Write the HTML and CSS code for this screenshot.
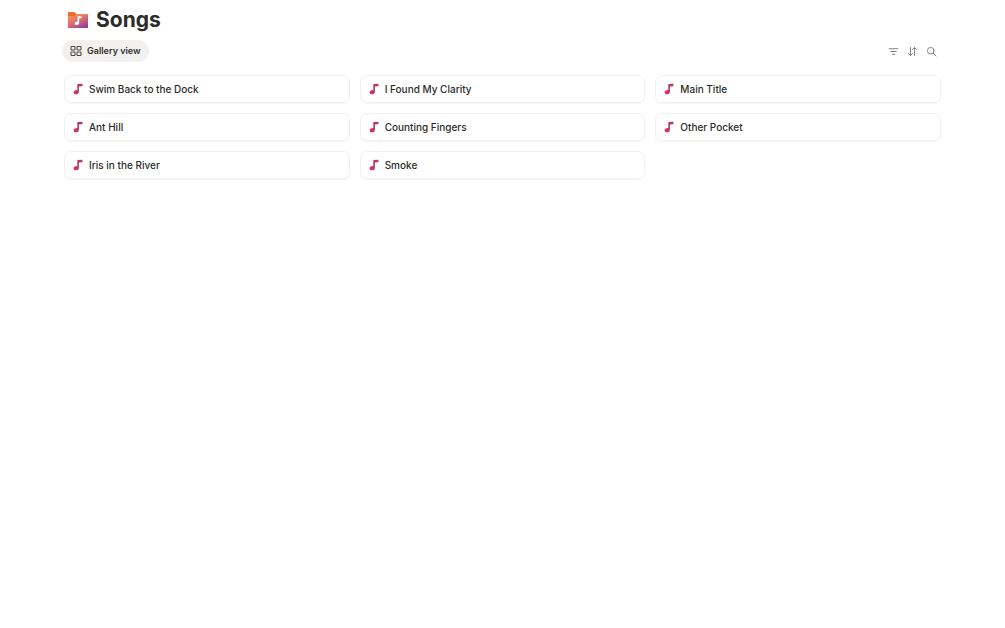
FILE: index.html
```html
<!DOCTYPE html>
<html lang="en">
<head>
<meta charset="utf-8">
<meta name="viewport" content="width=device-width, initial-scale=1">
<title>Songs</title>
<link rel="stylesheet" href="styles.css">
</head>
<body>
<svg width="0" height="0" class="defs" aria-hidden="true">
  <defs>
    <linearGradient id="note-fill" x1="1" y1="0" x2="0" y2="1">
      <stop offset="0" stop-color="#b04468"/>
      <stop offset=".5" stop-color="#b8325c"/>
      <stop offset="1" stop-color="#e03a62"/>
    </linearGradient>
    <symbol id="note" viewBox="0 0 10 12">
      <path fill="url(#note-fill)" d="M4.300 1.600Q4.300 1 4.900 1L8.900.8q.6 0 .6.600v1.300q0 .6-.6.600L5.900 3.600v5.100c0 1.600-1.100 2.600-2.800 2.600-1.500 0-2.500-.7-2.500-1.900 0-1.300 1.100-2.100 3.700-2.300z"/>
    </symbol>
  </defs>
</svg>
<main class="page">
  <header class="heading">
    <svg class="folder" viewBox="0 0 22 18" aria-hidden="true">
      <defs>
        <linearGradient id="folder-fill" x1="0" y1="0" x2=".75" y2="1">
          <stop offset="0" stop-color="#ff9c50"/>
          <stop offset=".5" stop-color="#e0706a"/>
          <stop offset="1" stop-color="#963f9c"/>
        </linearGradient>
      </defs>
      <path fill="#e8702c" d="M1 1.500Q1 1 1.500 1H7.500l2 2.200h11q.5 0 .5.5V8H1z"/>
      <path fill="url(#folder-fill)" d="M1 5H7.500l2-1.600H21V16.400q0 .6-.6.6H1.600Q1 17 1 16.400z"/>
      <path fill="#fff" d="M10.600 5.300h3.900v2h-2.300v4.500c0 1.400-1 2.200-2.400 2.200-1.300 0-2.100-.6-2.100-1.600 0-1.200 1-1.900 2.900-1.900z"/>
    </svg>
    <h1 class="title">Songs</h1>
  </header>
  <div class="toolbar">
    <button class="view" type="button">
      <svg class="view-icon" viewBox="0 0 12 12" fill="none" stroke="#4b4a47" stroke-width="1.1" aria-hidden="true">
        <rect x="1" y="1.500" width="4" height="3.500" rx=".7"/><rect x="7" y="1.500" width="4" height="3.500" rx=".7"/>
        <rect x="1" y="7" width="4" height="3.500" rx=".7"/><rect x="7" y="7" width="4" height="3.500" rx=".7"/>
      </svg>
      Gallery view
    </button>
    <div class="tools">
      <button class="tool" type="button" aria-label="Filter">
        <svg class="tool-icon" viewBox="0 0 11 11"><path d="M1.200 2.700h8.600M2.700 5.500h5.600M4.200 8.300h2.600"/></svg>
      </button>
      <button class="tool" type="button" aria-label="Sort">
        <svg class="tool-icon" viewBox="0 0 11 11"><path d="M3.500 1.500v8M1.500 7.500l2 2 2-2M7.500 9.500v-8M5.500 3.500l2-2 2 2"/></svg>
      </button>
      <button class="tool" type="button" aria-label="Search">
        <svg class="tool-icon" viewBox="0 0 11 11"><circle cx="4.700" cy="4.700" r="3.300"/><path d="M7.200 7.200l2.800 2.800"/></svg>
      </button>
    </div>
  </div>
  <nav class="gallery" aria-label="Songs">
    <a class="card" href="#"><svg class="note" aria-hidden="true"><use href="#note"/></svg>Swim Back to the Dock</a>
    <a class="card" href="#"><svg class="note" aria-hidden="true"><use href="#note"/></svg>I Found My Clarity</a>
    <a class="card" href="#"><svg class="note" aria-hidden="true"><use href="#note"/></svg>Main Title</a>
    <a class="card" href="#"><svg class="note" aria-hidden="true"><use href="#note"/></svg>Ant Hill</a>
    <a class="card" href="#"><svg class="note" aria-hidden="true"><use href="#note"/></svg>Counting Fingers</a>
    <a class="card" href="#"><svg class="note" aria-hidden="true"><use href="#note"/></svg>Other Pocket</a>
    <a class="card" href="#"><svg class="note" aria-hidden="true"><use href="#note"/></svg>Iris in the River</a>
    <a class="card" href="#"><svg class="note" aria-hidden="true"><use href="#note"/></svg>Smoke</a>
  </nav>
</main>
</body>
</html>
```

FILE: styles.css
```css
* { box-sizing: border-box; }
body {
  margin: 0;
  background: #fff;
  color: #2c2c2b;
  font-family: Inter, "Liberation Sans", sans-serif;
}
.defs { position: absolute; }
.page { padding: 6px 64px 24px; }
.heading {
  display: flex;
  align-items: center;
  gap: 7px;
  padding-left: 3px;
}
.folder { width: 22px; height: 18px; }
.title {
  margin: 0;
  font-size: 21px;
  line-height: 28px;
  font-weight: 700;
}
.toolbar {
  display: flex;
  align-items: center;
  justify-content: space-between;
  margin: 6px 0 13px -2px;
}
.view {
  display: flex;
  align-items: center;
  gap: 5px;
  height: 22px;
  padding: 0 8px;
  border: 0;
  border-radius: 11px;
  background: #f2f1f0;
  color: #32302c;
  font: 600 9px/14px Inter, "Liberation Sans", sans-serif;
}
.view-icon { width: 12px; height: 12px; }
.tools { display: flex; gap: 8px; padding: 1px 4px 0 0; }
.tool {
  display: flex;
  padding: 0;
  border: 0;
  background: none;
}
.tool-icon {
  width: 11px;
  height: 11px;
  fill: none;
  stroke: #8a8885;
  stroke-width: 1;
  stroke-linecap: round;
  stroke-linejoin: round;
}
.gallery {
  display: grid;
  grid-template-columns: repeat(3, 1fr);
  gap: 10px;
}
.card {
  display: flex;
  align-items: center;
  gap: 6px;
  padding: 6px 8px;
  border: 1px solid #f1f1f0;
  border-radius: 7px;
  box-shadow: 0 1px 1px #f4f4f3;
  color: #2c2c2b;
  font-size: 10px;
  line-height: 14px;
  font-weight: 500;
  text-decoration: none;
}
.note { width: 10px; height: 12px; flex: none; }
```
